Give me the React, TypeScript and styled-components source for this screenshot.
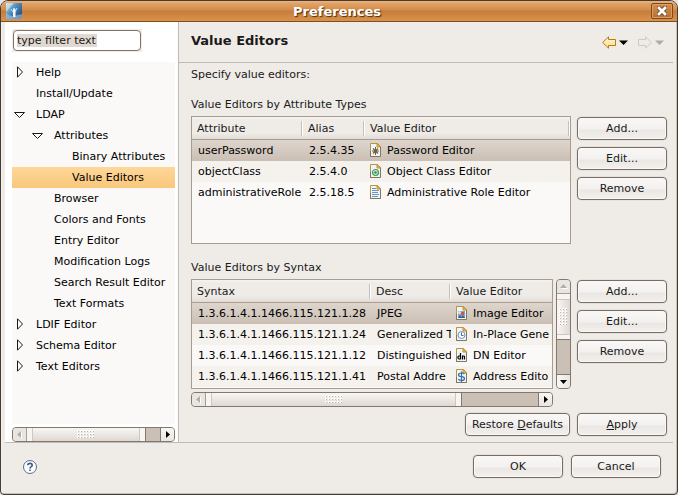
import React from "react";
import styled, { createGlobalStyle, css } from "styled-components";

const GlobalStyle = createGlobalStyle`
  *, *::before, *::after { box-sizing: border-box; }
  body { margin: 0; background: #e4e4e4; }
  body, button, input, table {
    font-family: "DejaVu Sans", Verdana, sans-serif;
    font-size: 11px;
    line-height: 15px;
    color: #1a1a1a;
  }
`;

const Window = styled.div`
  display: flex;
  flex-direction: column;
  min-height: 100vh;
  background: #efebe7;
  border: 1px solid #453c37;
  border-radius: 8px 8px 4px 4px;
  box-shadow: inset -1px -1px 0 #c9c0b5, inset 1px 0 0 #f7efe9;
  overflow: hidden;
`;

const TitleBar = styled.header`
  display: grid;
  grid-template-columns: 22px 1fr 22px;
  align-items: center;
  height: 21px;
  padding: 0 4px 0 5px;
  background: linear-gradient(#f0b57c 0, #e3a467 2px, #d28c4a 9px, #c67d3a 10px, #d9924c 100%);
  border-bottom: 1px solid #7d4f23;
`;

const WindowTitle = styled.div`
  padding-right: 5px;
  text-align: center;
  font-size: 13px;
  font-weight: bold;
  color: #fff;
  text-shadow: 1px 1px 1px #4d2b0c;
`;

const CloseButton = styled.button`
  display: flex;
  align-items: center;
  justify-content: center;
  height: 16px;
  padding: 0;
  background: linear-gradient(#cf8c4c, #b87334);
  border: 1px solid #7b4b1f;
  border-radius: 2px;
  box-shadow: inset 0 0 0 1px #dd9c60;
`;

const Body = styled.div`
  display: flex;
  flex: 1;
  margin: 0 4px;
  border-bottom: 1px solid #bfbcb8;
`;

const Sidebar = styled.nav`
  display: flex;
  flex-direction: column;
  flex: 0 0 174px;
  padding: 7px 3px 0 7px;
  background: #fff;
  border-right: 1px solid #bdbab6;
`;

const FilterBox = styled.label`
  display: flex;
  align-self: flex-start;
  padding: 1px;
  margin-bottom: 10px;
  background: #efebe7;
`;

const FilterInput = styled.input`
  width: 128px;
  height: 21px;
  padding: 0 3px;
  background: linear-gradient(#e1d9d1, #e1d9d1) 3px 3px / 80px 13px no-repeat, #fff;
  border: 1px solid #857466;
  border-radius: 4px;
  outline: none;
`;

const Tree = styled.ul`
  flex: 1;
  margin: 0 0 3px;
  padding: 0;
  list-style: none;
  background: #faf9f8;
  overflow: hidden;
`;

const TreeItem = styled.li<{ $depth: number; $selected: boolean }>`
  display: flex;
  align-items: center;
  height: 21px;
  padding-left: ${(p) => p.$depth * 18}px;
  white-space: nowrap;
  color: #000;
  ${(p) => p.$selected && css`background: linear-gradient(#ffd799, #f8c77a);`}
`;

const Expander = styled.span`
  display: flex;
  flex: 0 0 24px;
  padding-left: 2px;
`;

const Page = styled.main`
  display: flex;
  flex-direction: column;
  flex: 1;
  min-width: 0;
`;

const PageHeader = styled.div`
  display: flex;
  align-items: center;
  justify-content: space-between;
  height: 41px;
  padding: 0 9px 3px 12px;
  border-bottom: 1px solid #bfbcb8;
`;

const PageTitle = styled.h1`
  margin: 0;
  font-size: 13px;
  line-height: 17px;
`;

const HistoryNav = styled.div`
  display: flex;
  gap: 10px;
  padding-top: 4px;
`;

const HistoryButton = styled.button`
  display: flex;
  align-items: center;
  gap: 3px;
  padding: 0;
  border: 0;
  background: none;
`;

const PageContent = styled.div`
  display: flex;
  flex-direction: column;
  flex: 1;
  padding: 4px 6px 6px 12px;
`;

const Intro = styled.p`
  margin: 0 0 15px;
`;

const Group = styled.section<{ $grow?: boolean }>`
  display: grid;
  grid-template-columns: minmax(0, 1fr) 90px;
  grid-template-rows: auto 1fr;
  column-gap: 6px;
  row-gap: 4px;
  flex: ${(p) => (p.$grow ? "1 0 auto" : "none")};
  margin-bottom: ${(p) => (p.$grow ? 16 : 6)}px;
`;

const GroupLabel = styled.h2`
  grid-column: 1 / -1;
  margin: 0;
  font-size: 11px;
  font-weight: normal;
`;

const ButtonStack = styled.div`
  display: flex;
  flex-direction: column;
  gap: 7px;
  padding-top: 1px;
`;

const PushButton = styled.button<{ $width?: number }>`
  width: ${(p) => p.$width ?? 90}px;
  height: 23px;
  padding: 0 0 1px;
  white-space: nowrap;
  background: linear-gradient(#faf8f7 0, #f3f1ef 11px, #eae6e3 12px, #f2f0ed 100%);
  border: 1px solid #776d63;
  border-radius: 4px;
  box-shadow: inset 0 0 0 1px #faf8f6, 0 0 0 1px #e6e1dc;
`;

const TableFrame = styled.div<{ $height?: number }>`
  ${(p) => p.$height && css`height: ${p.$height}px;`}
  min-height: 110px;
  background: #faf9f8;
  border: 1px solid #a99c8f;
  overflow: hidden;
`;

const ScrollArea = styled.div`
  display: grid;
  grid-template-columns: minmax(0, 1fr) 15px;
  align-content: start;
  gap: 3px;
`;

const DataTable = styled.table`
  width: 100%;
  table-layout: fixed;
  border-collapse: separate;
  border-spacing: 0;
`;

const HeadCell = styled.th<{ $lined: boolean }>`
  height: 23px;
  padding: 0 2px 0 5px;
  text-align: left;
  font-weight: normal;
  white-space: nowrap;
  border-bottom: 1px solid #a99c8f;
  background:
    ${(p) => p.$lined && css`linear-gradient(90deg, #c5c0bb 1px, #fff 1px) right 0 top 4px / 2px 15px no-repeat,`}
    linear-gradient(#f5f3f1 0, #efebe7 3px, #efebe7 16px, #e1dcd7 100%);
`;

const Row = styled.tr<{ $selected: boolean }>`
  background: #faf9f8;
  color: #000;
  &:nth-child(even) { background: #f5f2ee; }
  ${(p) => p.$selected && css`background: linear-gradient(#ded5cd, #cbbfb4);`}
`;

const Cell = styled.td`
  height: 21px;
  padding: 0 0 0 6px;
  white-space: nowrap;
  overflow: hidden;
`;

const EditorCell = styled(Cell)`
  padding-left: 5px;
`;

const EditorName = styled.span`
  display: flex;
  align-items: center;
  gap: 6px;
  svg { flex: none; }
`;

const Scrollbar = styled.div<{ $vertical?: boolean }>`
  display: flex;
  flex-direction: ${(p) => (p.$vertical ? "column" : "row")};
  ${(p) => (p.$vertical ? css`width: 15px;` : css`height: 15px;`)}
  flex: none;
  background: #cbc0b5;
  border: 1px solid #83786b;
  border-radius: 4px;
  overflow: hidden;
`;

const ScrollArrow = styled.button<{ $vertical?: boolean; $end?: boolean }>`
  display: flex;
  align-items: center;
  justify-content: center;
  flex: 0 0 14px;
  padding: 0;
  border: 0 solid #83786b;
  background: linear-gradient(${(p) => (p.$vertical ? "90deg, " : "")}#f8f6f4, #e9e5e1);
  ${(p) => p.$vertical && p.$end && css`border-top-width: 1px;`}
  ${(p) => p.$vertical && !p.$end && css`border-bottom-width: 1px;`}
  ${(p) => !p.$vertical && p.$end && css`border-left-width: 1px;`}
  ${(p) => !p.$vertical && !p.$end && css`border-right-width: 1px;`}
  &:disabled { background: #e9e6e1; border-color: #a99c8f; }
`;

const Thumb = styled.div<{ $vertical?: boolean; $size: number }>`
  display: flex;
  align-items: center;
  justify-content: center;
  flex: ${(p) => p.$size} 1 0;
  border: 0 solid #83786b;
  ${(p) => (p.$vertical
    ? css`
        border-bottom-width: 1px;
        background:
          linear-gradient(#f7f5f3 5px, #cfc8c1 5px, #cfc8c1 6px, transparent 6px) top / 100% 6px no-repeat,
          linear-gradient(#cfc8c1 1px, #f7f5f3 1px) bottom / 100% 5px no-repeat,
          linear-gradient(90deg, #f8f6f4, #ded8d2);
      `
    : css`
        border-right-width: 1px;
        background:
          linear-gradient(90deg, #f7f5f3 5px, #cfc8c1 5px, #cfc8c1 6px, transparent 6px) left / 6px 100% no-repeat,
          linear-gradient(90deg, #cfc8c1 1px, #f7f5f3 1px) right / 6px 100% no-repeat,
          linear-gradient(#f8f6f4, #ded8d2);
      `)}
`;

const Trough = styled.div<{ $size: number }>`
  flex: ${(p) => p.$size} 1 0;
`;

const PageActions = styled.div`
  display: flex;
  justify-content: flex-end;
  gap: 7px;
`;

const Footer = styled.footer`
  display: flex;
  align-items: center;
  gap: 8px;
  height: 51px;
  padding: 0 16px 4px 21px;
`;

const HelpButton = styled.button`
  display: flex;
  margin-right: auto;
  padding: 0;
  border: 0;
  background: none;
`;

function ArrowGlyph({ dir, disabled }: { dir: "left" | "right" | "up" | "down"; disabled?: boolean }) {
  const paths = {
    left: "M6 1 L2 4.5 L6 8Z",
    right: "M3 1 L7 4.5 L3 8Z",
    up: "M1 6 L4.5 2 L8 6Z",
    down: "M1 3 L4.5 7 L8 3Z",
  };
  return (
    <svg width="9" height="9" viewBox="0 0 9 9" aria-hidden="true">
      {disabled && <path d={paths[dir]} fill="#fff" transform="translate(1 1)" />}
      <path d={paths[dir]} fill={disabled ? "#b5aea6" : "#000"} />
    </svg>
  );
}

function Grip({ vertical }: { vertical?: boolean }) {
  const cols = vertical ? 3 : 6;
  const rows = vertical ? 6 : 3;
  const dots = [];
  for (let x = 0; x < cols; x++) {
    for (let y = 0; y < rows; y++) {
      dots.push(
        <g key={`${x}-${y}`}>
          <rect x={x * 3} y={y * 3} width="2" height="2" fill="#fff" />
          <rect x={x * 3 + 1} y={y * 3 + 1} width="1" height="1" fill="#bbb2a9" />
        </g>
      );
    }
  }
  return (
    <svg width={cols * 3} height={rows * 3} shapeRendering="crispEdges" aria-hidden="true">
      {dots}
    </svg>
  );
}

function ScrollControl({ vertical, thumb, rest }: { vertical?: boolean; thumb: number; rest: number }) {
  return (
    <Scrollbar $vertical={vertical}>
      <ScrollArrow $vertical={vertical} disabled aria-label={vertical ? "Scroll up" : "Scroll left"}>
        <ArrowGlyph dir={vertical ? "up" : "left"} disabled />
      </ScrollArrow>
      <Thumb $vertical={vertical} $size={thumb}>
        <Grip vertical={vertical} />
      </Thumb>
      <Trough $size={rest} />
      <ScrollArrow $vertical={vertical} $end aria-label={vertical ? "Scroll down" : "Scroll right"}>
        <ArrowGlyph dir={vertical ? "down" : "right"} />
      </ScrollArrow>
    </Scrollbar>
  );
}

function AppIcon() {
  return (
    <svg width="16" height="16" viewBox="0 0 16 16" aria-hidden="true">
      <defs>
        <linearGradient id="sky" x1="0" y1="0" x2="1" y2="0.8">
          <stop offset="0" stopColor="#c3e0ef" />
          <stop offset="0.4" stopColor="#5c97c6" />
          <stop offset="1" stopColor="#1c4680" />
        </linearGradient>
      </defs>
      <rect width="16" height="16" rx="1" fill="url(#sky)" />
      <path d="M0 0H8L0 9Z" fill="#e4f0f5" opacity="0.55" />
      <path d="M0 10Q4 14 8 13T16 11V16H0Z" fill="#a9cbe2" opacity="0.6" />
      <path d="M7 6L8 5L9.5 6V14H7Z" fill="#f4f8fa" />
      <path d="M5 6L7 9M11 5L9 9" stroke="#cfe3ef" strokeWidth="1" />
    </svg>
  );
}

type IconKind = "password" | "object" | "role" | "image" | "time" | "dn" | "address";

function EditorIcon({ kind }: { kind: IconKind }) {
  return (
    <svg width="11" height="15" viewBox="0 0 11 15" aria-hidden="true">
      <path d="M0.5 0.5H7.5L10.5 3.5V13.5H0.5Z" fill="#eef4fb" />
      <path d="M0.5 14V0.5H7.5L10.5 3.5" fill="none" stroke="#b8963c" />
      <path d="M0.5 8V13.5H10.5V3.5" fill="none" stroke="#7f7a55" />
      <path d="M7 0.5V4H10.5Z" fill="#ecc25f" stroke="#c2912b" strokeWidth="1" />
      {kind === "password" && (
        <path d="M5.5 4V12M2 8H9M3 5.5L8 10.5M8 5.5L3 10.5" stroke="#75623c" strokeWidth="1.1" />
      )}
      {kind === "object" && (
        <>
          <circle cx="5.5" cy="8.5" r="3" fill="#cfe9d2" stroke="#3f9a5c" strokeWidth="1.2" />
          <circle cx="5.5" cy="8.5" r="1.2" fill="#2f8850" />
        </>
      )}
      {kind === "role" && (
        <path d="M2 3.5H6M2 5.5H9M2 7.5H8M2 9.5H9M2 11.5H8" stroke="#6f94c3" />
      )}
      {kind === "image" && (
        <>
          <rect x="2" y="5" width="7" height="7" fill="#7ba4cf" />
          <circle cx="3.5" cy="6.5" r="1.5" fill="#dce6ef" />
          <rect x="5" y="6" width="3" height="3" fill="#cf5940" />
          <path d="M2 12L4 9L6 11L7 9L9 12Z" fill="#3d5f96" />
        </>
      )}
      {kind === "time" && (
        <>
          <circle cx="5.5" cy="8" r="3.5" fill="#f6faff" stroke="#7190b8" />
          <path d="M5.5 5.5V8.5H7.5" fill="none" stroke="#446998" />
        </>
      )}
      {kind === "dn" && (
        <path
          d="M4.5 5V11.5M4.5 8H3Q2 8 2 9.5T3 11H4.5M6.5 11.5V7.5M6.5 8H8Q8.5 8 8.5 9V11.5"
          fill="none"
          stroke="#000"
          strokeWidth="1.2"
        />
      )}
      {kind === "address" && (
        <path
          d="M8.5 5Q7.5 4 5.5 4Q2.5 4 2.5 6Q2.5 7.5 5.5 7.7Q8.5 8 8.5 9.5Q8.5 11.5 5.5 11.5Q3.5 11.5 2.2 10.3M5.5 2.5V13"
          fill="none"
          stroke="#3c6cab"
          strokeWidth="1.2"
        />
      )}
    </svg>
  );
}

function HistoryArrow({ forward }: { forward?: boolean }) {
  return (
    <>
      <svg width="14" height="13" viewBox="0 0 14 13" aria-hidden="true">
        <defs>
          <linearGradient id="gold" x1="0" y1="0" x2="0" y2="1">
            <stop offset="0" stopColor="#fffbe2" />
            <stop offset="1" stopColor="#fbdc7c" />
          </linearGradient>
        </defs>
        <path
          d="M0.7 6.5L6.5 0.8V3.5H13.5V9.5H6.5V12.2Z"
          transform={forward ? "translate(14 0) scale(-1 1)" : undefined}
          fill={forward ? "#efebe7" : "url(#gold)"}
          stroke={forward ? "#cdc9c4" : "#b67d13"}
        />
      </svg>
      <svg width="9" height="5" viewBox="0 0 9 5" aria-hidden="true">
        <path d="M0 0.5H9L4.5 5Z" fill={forward ? "#b5a99e" : "#000"} />
      </svg>
    </>
  );
}

interface TreeNode {
  label: string;
  depth: number;
  state?: "open" | "closed";
  selected?: boolean;
}

const treeNodes: TreeNode[] = [
  { label: "Help", depth: 0, state: "closed" },
  { label: "Install/Update", depth: 0 },
  { label: "LDAP", depth: 0, state: "open" },
  { label: "Attributes", depth: 1, state: "open" },
  { label: "Binary Attributes", depth: 2 },
  { label: "Value Editors", depth: 2, selected: true },
  { label: "Browser", depth: 1 },
  { label: "Colors and Fonts", depth: 1 },
  { label: "Entry Editor", depth: 1 },
  { label: "Modification Logs", depth: 1 },
  { label: "Search Result Editor", depth: 1 },
  { label: "Text Formats", depth: 1 },
  { label: "LDIF Editor", depth: 0, state: "closed" },
  { label: "Schema Editor", depth: 0, state: "closed" },
  { label: "Text Editors", depth: 0, state: "closed" },
];

interface EditorRow {
  key: string;
  info: string;
  editor: string;
  icon: IconKind;
}

const attributeRows: EditorRow[] = [
  { key: "userPassword", info: "2.5.4.35", editor: "Password Editor", icon: "password" },
  { key: "objectClass", info: "2.5.4.0", editor: "Object Class Editor", icon: "object" },
  { key: "administrativeRole", info: "2.5.18.5", editor: "Administrative Role Editor", icon: "role" },
];

const syntaxRows: EditorRow[] = [
  { key: "1.3.6.1.4.1.1466.115.121.1.28", info: "JPEG", editor: "Image Editor", icon: "image" },
  { key: "1.3.6.1.4.1.1466.115.121.1.24", info: "Generalized T", editor: "In-Place Gene", icon: "time" },
  { key: "1.3.6.1.4.1.1466.115.121.1.12", info: "Distinguished", editor: "DN Editor", icon: "dn" },
  { key: "1.3.6.1.4.1.1466.115.121.1.41", info: "Postal Addre", editor: "Address Edito", icon: "address" },
];

function EditorTable({ heads, widths, rows, lastLined, label }: {
  heads: string[];
  widths: number[];
  rows: EditorRow[];
  lastLined?: boolean;
  label: string;
}) {
  return (
    <DataTable aria-labelledby={label}>
      <colgroup>
        {widths.map((w) => <col key={w} width={w} />)}
        <col />
      </colgroup>
      <thead>
        <tr>
          {heads.map((h, i) => (
            <HeadCell key={h} scope="col" $lined={i < 2 || !!lastLined}>{h}</HeadCell>
          ))}
        </tr>
      </thead>
      <tbody>
        {rows.map((r, i) => (
          <Row key={r.key} $selected={i === 0}>
            <Cell>{r.key}</Cell>
            <Cell>{r.info}</Cell>
            <EditorCell>
              <EditorName><EditorIcon kind={r.icon} />{r.editor}</EditorName>
            </EditorCell>
          </Row>
        ))}
      </tbody>
    </DataTable>
  );
}

function EditButtons() {
  return (
    <ButtonStack>
      <PushButton>Add...</PushButton>
      <PushButton>Edit...</PushButton>
      <PushButton>Remove</PushButton>
    </ButtonStack>
  );
}

export default function App() {
  return (
    <>
      <GlobalStyle />
      <Window>
        <TitleBar>
          <AppIcon />
          <WindowTitle>Preferences</WindowTitle>
          <CloseButton aria-label="Close">
            <svg width="10" height="10" viewBox="0 0 10 10" aria-hidden="true">
              <path d="M2 2L8 8M8 2L2 8" stroke="#6b3d14" strokeWidth="4.4" strokeLinecap="square" />
              <path d="M2 2L8 8M8 2L2 8" stroke="#fff" strokeWidth="2.8" strokeLinecap="square" />
            </svg>
          </CloseButton>
        </TitleBar>
        <Body>
          <Sidebar>
            <FilterBox>
              <FilterInput aria-label="Filter" defaultValue="type filter text" />
            </FilterBox>
            <Tree role="tree">
              {treeNodes.map((n) => (
                <TreeItem
                  key={n.label}
                  role="treeitem"
                  aria-expanded={n.state ? n.state === "open" : undefined}
                  aria-selected={!!n.selected}
                  $depth={n.depth}
                  $selected={!!n.selected}
                >
                  <Expander>
                    {n.state && (
                      <svg width="12" height="13" viewBox="0 0 12 13" aria-hidden="true">
                        <path
                          d={n.state === "open" ? "M0.5 4.5H10.5L5.5 9.5Z" : "M3.5 0.8V11.2L8.5 6Z"}
                          fill="#fff"
                          stroke="#1a1a1a"
                        />
                      </svg>
                    )}
                  </Expander>
                  {n.label}
                </TreeItem>
              ))}
            </Tree>
            <ScrollControl thumb={120} rest={14} />
          </Sidebar>
          <Page>
            <PageHeader>
              <PageTitle>Value Editors</PageTitle>
              <HistoryNav>
                <HistoryButton aria-label="Back"><HistoryArrow /></HistoryButton>
                <HistoryButton aria-label="Forward" disabled><HistoryArrow forward /></HistoryButton>
              </HistoryNav>
            </PageHeader>
            <PageContent>
              <Intro>Specify value editors:</Intro>
              <Group $grow>
                <GroupLabel id="by-attribute">Value Editors by Attribute Types</GroupLabel>
                <TableFrame>
                  <EditorTable
                    label="by-attribute"
                    heads={["Attribute", "Alias", "Value Editor"]}
                    widths={[111, 62]}
                    rows={attributeRows}
                    lastLined
                  />
                </TableFrame>
                <EditButtons />
              </Group>
              <Group>
                <GroupLabel id="by-syntax">Value Editors by Syntax</GroupLabel>
                <ScrollArea>
                  <TableFrame $height={110}>
                    <EditorTable
                      label="by-syntax"
                      heads={["Syntax", "Desc", "Value Editor"]}
                      widths={[179, 80]}
                      rows={syntaxRows}
                    />
                  </TableFrame>
                  <ScrollControl vertical thumb={46} rest={34} />
                  <ScrollControl thumb={257} rest={76} />
                </ScrollArea>
                <EditButtons />
              </Group>
              <PageActions>
                <PushButton $width={105}>Restore <u>D</u>efaults</PushButton>
                <PushButton><u>A</u>pply</PushButton>
              </PageActions>
            </PageContent>
          </Page>
        </Body>
        <Footer>
          <HelpButton aria-label="Help">
            <svg width="16" height="16" viewBox="0 0 16 16" aria-hidden="true">
              <circle cx="8" cy="8" r="6.5" fill="#fbfcfd" stroke="#56708f" />
              <path
                d="M5.8 6.3Q5.8 4.4 8 4.4T10.2 6.2Q10.2 7.2 9 7.9Q8 8.4 8 9.6M8 10.6V12"
                fill="none"
                stroke="#3d5a80"
                strokeWidth="1.6"
              />
            </svg>
          </HelpButton>
          <PushButton>OK</PushButton>
          <PushButton>Cancel</PushButton>
        </Footer>
      </Window>
    </>
  );
}
